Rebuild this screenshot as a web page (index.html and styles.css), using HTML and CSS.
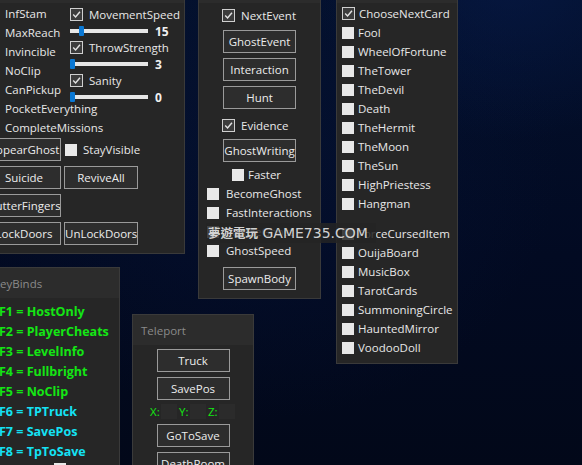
FILE: index.html
```html
<!DOCTYPE html>
<html>
<head>
<meta charset="utf-8">
<link rel="stylesheet" href="styles.css">
</head>
<body>
<div class="desk">

  <div class="win w-player">
    <div class="win-title"></div>
    <div class="player-top">
      <div class="label-col">
        <div class="lbl">InfStam</div>
        <div class="lbl">MaxReach</div>
        <div class="lbl">Invincible</div>
        <div class="lbl">NoClip</div>
        <div class="lbl">CanPickup</div>
        <div class="lbl">PocketEverything</div>
        <div class="lbl">CompleteMissions</div>
      </div>
      <div class="ctrl-col">
        <div class="tog tog-wide"><span class="box on"><svg viewBox="0 0 13 13"><path d="M2.6 6.6 L5.4 9.4 L10.6 3.2"/></svg></span>MovementSpeed</div>
        <div class="slider-row"><div class="track"><span class="thumb" style="left:9px"></span></div><b class="val">15</b></div>
        <div class="tog tog-wide"><span class="box on"><svg viewBox="0 0 13 13"><path d="M2.6 6.6 L5.4 9.4 L10.6 3.2"/></svg></span>ThrowStrength</div>
        <div class="slider-row"><div class="track"><span class="thumb" style="left:0px"></span></div><b class="val">3</b></div>
        <div class="tog tog-wide"><span class="box on"><svg viewBox="0 0 13 13"><path d="M2.6 6.6 L5.4 9.4 L10.6 3.2"/></svg></span>Sanity</div>
        <div class="slider-row"><div class="track"><span class="thumb" style="left:0px"></span></div><b class="val">0</b></div>
      </div>
    </div>
    <div class="btn-grid">
      <div class="btn-row"><button class="btn">AppearGhost</button><div class="tog tog-wide"><span class="box"></span>StayVisible</div></div>
      <div class="btn-row"><button class="btn">Suicide</button><button class="btn">ReviveAll</button></div>
      <div class="btn-row"><button class="btn">ButterFingers</button></div>
      <div class="btn-row"><button class="btn">LockDoors</button><button class="btn">UnLockDoors</button></div>
    </div>
  </div>

  <div class="win w-events">
    <div class="win-title"></div>
    <div class="ev-body">
      <div class="tog tog-wide ev-next"><span class="box on"><svg viewBox="0 0 13 13"><path d="M2.6 6.6 L5.4 9.4 L10.6 3.2"/></svg></span>NextEvent</div>
      <button class="btn ev-btn ev-first">GhostEvent</button>
      <button class="btn ev-btn">Interaction</button>
      <button class="btn ev-btn">Hunt</button>
      <div class="tog tog-wide ev-evid"><span class="box on"><svg viewBox="0 0 13 13"><path d="M2.6 6.6 L5.4 9.4 L10.6 3.2"/></svg></span>Evidence</div>
      <button class="btn ev-btn ev-gw">GhostWriting</button>
      <div class="tog tog-row ev-faster"><span class="box"></span>Faster</div>
      <div class="tog tog-row ev-left"><span class="box"></span>BecomeGhost</div>
      <div class="tog tog-row ev-left"><span class="box"></span>FastInteractions</div>
      <div class="tog tog-row ev-left"><span class="box"></span>FreezeGhost</div>
      <div class="tog tog-row ev-left"><span class="box"></span>GhostSpeed</div>
      <button class="btn ev-btn ev-spawn">SpawnBody</button>
    </div>
  </div>

  <div class="win w-cards">
    <div class="win-title"></div>
    <div class="cards-body">
      <div class="tog card"><span class="box on"><svg viewBox="0 0 13 13"><path d="M2.6 6.6 L5.4 9.4 L10.6 3.2"/></svg></span>ChooseNextCard</div>
      <div class="tog card"><span class="box"></span>Fool</div>
      <div class="tog card"><span class="box"></span>WheelOfFortune</div>
      <div class="tog card"><span class="box"></span>TheTower</div>
      <div class="tog card"><span class="box"></span>TheDevil</div>
      <div class="tog card"><span class="box"></span>Death</div>
      <div class="tog card"><span class="box"></span>TheHermit</div>
      <div class="tog card"><span class="box"></span>TheMoon</div>
      <div class="tog card"><span class="box"></span>TheSun</div>
      <div class="tog card"><span class="box"></span>HighPriestess</div>
      <div class="tog card"><span class="box"></span>Hangman</div>
      <div class="tog card card-gap"><span class="box"></span>ForceCursedItem</div>
      <div class="tog card"><span class="box"></span>OuijaBoard</div>
      <div class="tog card"><span class="box"></span>MusicBox</div>
      <div class="tog card"><span class="box"></span>TarotCards</div>
      <div class="tog card"><span class="box"></span>SummoningCircle</div>
      <div class="tog card"><span class="box"></span>HauntedMirror</div>
      <div class="tog card"><span class="box"></span>VoodooDoll</div>
    </div>
  </div>

  <div class="win w-keys">
    <div class="win-title keys-title">KeyBinds</div>
    <div class="keys-body">
      <div class="key green">F1 = HostOnly</div>
      <div class="key green">F2 = PlayerCheats</div>
      <div class="key green">F3 = LevelInfo</div>
      <div class="key green">F4 = Fullbright</div>
      <div class="key green">F5 = NoClip</div>
      <div class="key cyan">F6 = TPTruck</div>
      <div class="key cyan">F7 = SavePos</div>
      <div class="key cyan">F8 = TpToSave</div>
      <div class="key key-last">Fullbright <span class="box"></span> Hotkeys</div>
    </div>
  </div>

  <div class="win w-tele">
    <div class="win-title tele-title">Teleport</div>
    <div class="tele-body">
      <button class="btn tele-btn">Truck</button>
      <button class="btn tele-btn">SavePos</button>
      <div class="xyz">
        <span class="ax">X:</span><span class="field"></span>
        <span class="ax">Y:</span><span class="field"></span>
        <span class="ax">Z:</span><span class="field"></span>
      </div>
      <button class="btn tele-btn">GoToSave</button>
      <button class="btn tele-btn">DeathRoom</button>
    </div>
  </div>

  <div class="watermark"><span class="wm-cjk">夢遊電玩</span> GAME735.COM</div>
</div>
</body>
</html>
```

FILE: styles.css
```css
html, body {
  margin: 0;
  padding: 0;
  background: #020a1e;
}

.desk {
  position: relative;
  width: 582px;
  height: 465px;
  overflow: hidden;
  background:
    radial-gradient(ellipse 200px 160px at 510px -20px, rgba(8, 28, 78, 0.55), rgba(8, 28, 78, 0) 100%),
    radial-gradient(ellipse 300px 260px at 260px 160px, rgba(6, 20, 56, 0.5), rgba(6, 20, 56, 0) 100%),
    linear-gradient(180deg, #03102c 0%, #020a22 55%, #020819 100%);
  font-family: "Open Sans", "Noto Sans", sans-serif;
  font-size: 11.5px;
  color: #e8e8e8;
}

/* windows */
.win {
  position: absolute;
  box-sizing: border-box;
  background: #262626;
  border: 1px solid #3a3a3a;
  display: flex;
  flex-direction: column;
  overflow: hidden;
}

.win-title {
  flex: none;
  height: 30px;
  background: #2c2c2c;
  color: #8a8a8a;
  display: flex;
  align-items: center;
  padding-left: 8px;
}

/* controls */
.btn {
  box-sizing: border-box;
  width: 74px;
  height: 23px;
  margin: 0;
  padding: 0;
  background: #2d2d2d;
  border: 1px solid #9a9a9a;
  border-radius: 0;
  color: #ececec;
  font-family: inherit;
  font-size: 11.5px;
  line-height: 21px;
  text-align: center;
  white-space: nowrap;
  overflow: hidden;
}

.tog {
  display: flex;
  align-items: center;
  white-space: nowrap;
}

.box {
  flex: none;
  box-sizing: border-box;
  width: 12px;
  height: 12px;
  background: #e8e8e8;
  display: inline-block;
}

.box.on {
  width: 13px;
  height: 13px;
  background: #3c3c3c;
  border: 1px solid #cfcfcf;
}

.box svg {
  display: block;
  width: 11px;
  height: 11px;
}

.box svg path {
  fill: none;
  stroke: #e2e2e2;
  stroke-width: 1.7;
}

.tog-wide {
  gap: 6px;
  height: 17px;
}

.tog-row {
  gap: 7px;
  height: 19px;
}

/* player window */
.w-player {
  left: -20px;
  top: -28px;
  width: 205px;
  height: 282px;
}

.player-top {
  display: flex;
}

.label-col {
  width: 65px;
  padding-left: 24px;
  padding-top: 1px;
  white-space: nowrap;
}

.lbl {
  height: 19px;
  line-height: 19px;
}

.ctrl-col {
  display: flex;
  flex-direction: column;
  padding-top: 3px;
}

.slider-row {
  height: 16px;
  display: flex;
  align-items: center;
  gap: 7px;
}

.track {
  position: relative;
  width: 78px;
  height: 4px;
  background: #e6e6e6;
}

.thumb {
  position: absolute;
  top: -3px;
  width: 5px;
  height: 10px;
  background: #0a78d4;
  border-radius: 1px;
}

.val {
  font-weight: 700;
  font-size: 12px;
  color: #f0f0f0;
}

.btn-grid {
  display: flex;
  flex-direction: column;
  gap: 5px;
  padding-left: 6px;
  margin-top: 1px;
}

.btn-row {
  display: flex;
  gap: 3px;
  height: 23px;
  align-items: center;
}

.btn-row .tog {
  margin-left: 1px;
}

/* events window */
.w-events {
  left: 198px;
  top: -28px;
  width: 123px;
  height: 327px;
}

.ev-body {
  display: flex;
  flex-direction: column;
  align-items: flex-start;
  padding-top: 4px;
}

.ev-next {
  margin-left: 23px;
}

.ev-btn {
  width: 73px;
  margin-top: 5px;
  align-self: center;
}

.ev-first {
  margin-top: 6px;
}

.ev-evid {
  margin-left: 23px;
  margin-top: 8px;
}

.ev-gw {
  margin-top: 5px;
}

.ev-faster {
  margin-left: 33px;
  margin-top: 3px;
  gap: 4px;
}

.ev-left {
  margin-left: 8px;
}

.ev-spawn {
  margin-top: 7px;
}

/* cards window */
.w-cards {
  left: 336px;
  top: -28px;
  width: 122px;
  height: 392px;
}

.cards-body {
  display: flex;
  flex-direction: column;
  padding-top: 1px;
  padding-left: 5px;
}

.card {
  height: 19px;
  gap: 4px;
}

.card-gap {
  margin-top: 11px;
}

/* keybinds window */
.w-keys {
  left: -40px;
  top: 267px;
  width: 160px;
  height: 230px;
}

.keys-title {
  padding-left: 32px;
}

.keys-body {
  padding-left: 38px;
  padding-top: 4px;
}

.key {
  height: 20px;
  line-height: 20px;
  font-weight: 700;
  font-size: 12.5px;
  white-space: nowrap;
}

.green {
  color: #14e614;
}

.cyan {
  color: #14e2f4;
}

.key-last {
  color: #e6e6e6;
  font-weight: 400;
  font-size: 11.5px;
  display: flex;
  align-items: flex-start;
  gap: 4px;
  line-height: 16px;
  padding-top: 0;
}

.key-last .box {
  margin-top: 1px;
}

/* teleport window */
.w-tele {
  left: 132px;
  top: 314px;
  width: 122px;
  height: 180px;
}

.tele-title {
  padding-left: 8px;
}

.tele-body {
  display: flex;
  flex-direction: column;
  align-items: center;
  gap: 5px;
  padding-top: 4px;
}

.tele-btn {
  width: 73px;
}

.xyz {
  align-self: flex-start;
  display: flex;
  align-items: center;
  height: 15px;
  margin: -1px 0 0 17px;
}

.ax {
  width: 11px;
  color: #14e614;
}

.field {
  width: 16px;
  height: 15px;
  background: #2b2b2b;
  margin-right: 2px;
}

/* watermark overlay */
.watermark {
  position: absolute;
  left: 206px;
  top: 223px;
  width: 170px;
  height: 20px;
  box-sizing: border-box;
  padding-left: 2px;
  background: rgba(36, 36, 36, 0.86);
  color: rgba(232, 232, 232, 0.9);
  font-family: "DejaVu Sans", "Noto Sans CJK TC", sans-serif;
  font-size: 14px;
  line-height: 20px;
  white-space: nowrap;
}

.wm-cjk {
  font-family: "Noto Sans CJK TC", sans-serif;
  font-size: 12.5px;
  font-weight: 700;
}
```
